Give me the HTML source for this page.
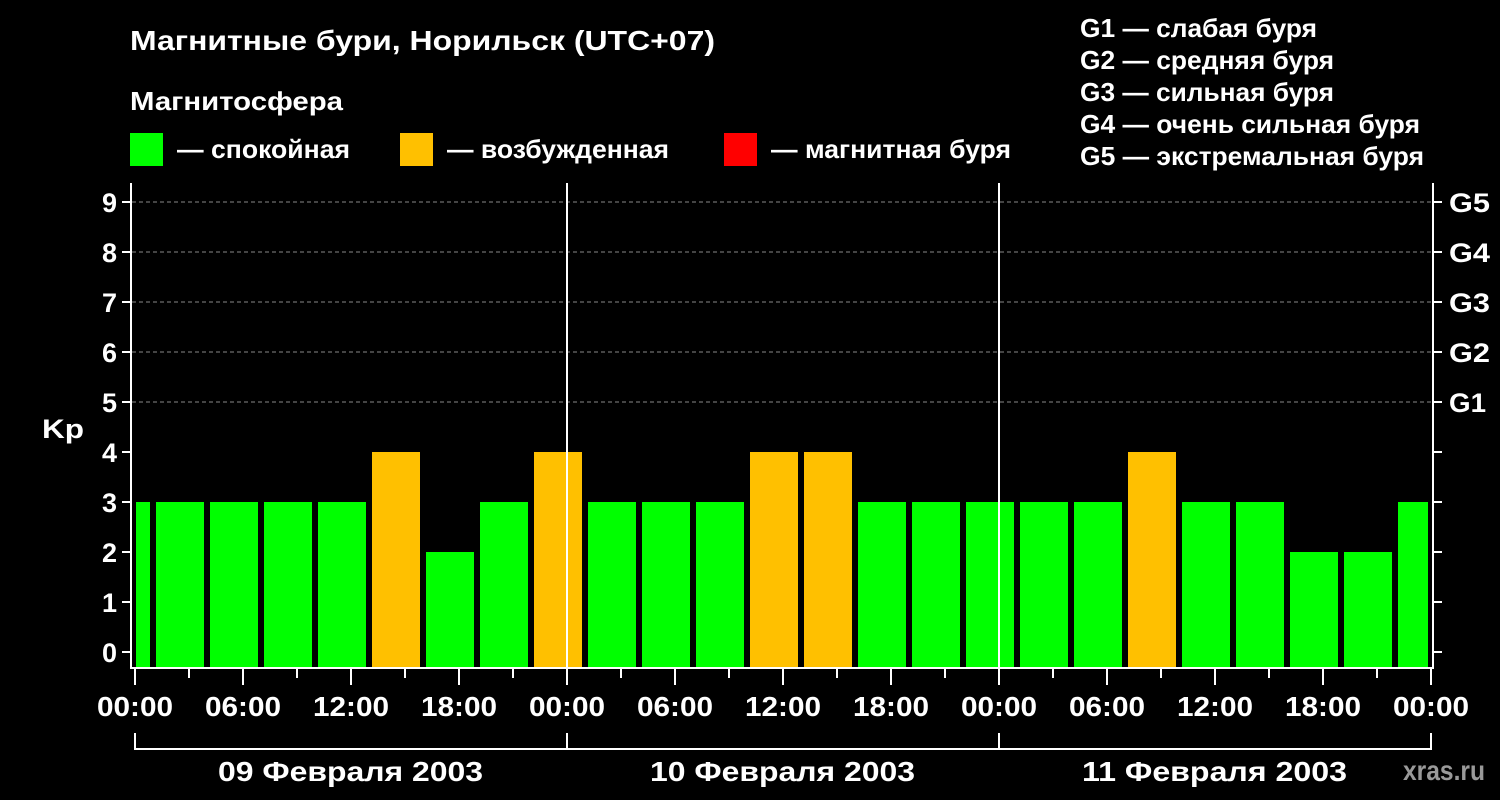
<!DOCTYPE html>
<html><head><meta charset="utf-8"><style>
html,body{margin:0;padding:0;background:#000;}
svg{display:block;font-family:"Liberation Sans",Arial,sans-serif;font-weight:bold;}
</style></head><body>
<svg width="1500" height="800" xmlns="http://www.w3.org/2000/svg">
<rect width="1500" height="800" fill="#000"/>
<g fill="#fff" font-size="26" lengthAdjust="spacingAndGlyphs">
<text x="130" y="50" font-size="28" textLength="585" lengthAdjust="spacingAndGlyphs">Магнитные бури, Норильск (UTC+07)</text>
<text x="130" y="110" textLength="213" lengthAdjust="spacingAndGlyphs">Магнитосфера</text>
<text x="177" y="158" textLength="173" lengthAdjust="spacingAndGlyphs">— спокойная</text>
<text x="447" y="158" textLength="222" lengthAdjust="spacingAndGlyphs">— возбужденная</text>
<text x="771" y="158" textLength="240" lengthAdjust="spacingAndGlyphs">— магнитная буря</text>
<text x="1080" y="37" textLength="237" lengthAdjust="spacingAndGlyphs">G1 — слабая буря</text>
<text x="1080" y="69" textLength="254" lengthAdjust="spacingAndGlyphs">G2 — средняя буря</text>
<text x="1080" y="101" textLength="254" lengthAdjust="spacingAndGlyphs">G3 — сильная буря</text>
<text x="1080" y="133" textLength="340" lengthAdjust="spacingAndGlyphs">G4 — очень сильная буря</text>
<text x="1080" y="165" textLength="344" lengthAdjust="spacingAndGlyphs">G5 — экстремальная буря</text>
</g>
<rect x="130" y="133" width="33" height="33" fill="#00ff00"/>
<rect x="400" y="133" width="33" height="33" fill="#ffc000"/>
<rect x="724" y="133" width="33" height="33" fill="#ff0000"/>
<g stroke="#888" stroke-dasharray="4,3" stroke-width="1">
<line x1="132" x2="1433" y1="202" y2="202"/><line x1="132" x2="1433" y1="252" y2="252"/>
<line x1="132" x2="1433" y1="302" y2="302"/><line x1="132" x2="1433" y1="352" y2="352"/>
<line x1="132" x2="1433" y1="402" y2="402"/>
</g>
<g id="bars"></g>
<g stroke="#fff" stroke-width="2" fill="none">
<line x1="567" y1="183" x2="567" y2="668"/><line x1="999" y1="183" x2="999" y2="668"/>
<line x1="131" y1="183" x2="131" y2="669"/><line x1="1433" y1="183" x2="1433" y2="669"/>
<line x1="130" y1="668" x2="1434" y2="668"/>
<path d="M135 733V749H1431V733M567 733V749M999 733V749"/>
</g>
<g fill="#fff" font-size="27" text-anchor="end" id="yl"></g>
<text x="42" y="438" fill="#fff" font-size="27" textLength="42" lengthAdjust="spacingAndGlyphs">Kp</text>
<g fill="#fff" font-size="27">
<text x="1449" y="212" textLength="41" lengthAdjust="spacingAndGlyphs">G5</text><text x="1449" y="262" textLength="41" lengthAdjust="spacingAndGlyphs">G4</text><text x="1449" y="312" textLength="41" lengthAdjust="spacingAndGlyphs">G3</text>
<text x="1449" y="362" textLength="41" lengthAdjust="spacingAndGlyphs">G2</text><text x="1449" y="412" textLength="37" lengthAdjust="spacingAndGlyphs">G1</text>
</g>
<g fill="#fff" font-size="28" id="xl"></g>
<g fill="#fff" font-size="28">
<text x="218" y="781" textLength="265" lengthAdjust="spacingAndGlyphs">09 Февраля 2003</text>
<text x="650" y="781" textLength="265" lengthAdjust="spacingAndGlyphs">10 Февраля 2003</text>
<text x="1082" y="781" textLength="265" lengthAdjust="spacingAndGlyphs">11 Февраля 2003</text>
</g>
<text x="1403" y="780" fill="#999" font-size="28" textLength="82" lengthAdjust="spacingAndGlyphs">xras.ru</text>
<script>
var ns="http://www.w3.org/2000/svg";
function el(p,t,a,tx){var e=document.createElementNS(ns,t);for(var k in a)e.setAttribute(k,a[k]);if(tx)e.textContent=tx;(typeof p=='string'?document.getElementById(p):p).appendChild(e);return e;}
var svg=document.querySelector('svg');
var G="#00ff00",O="#ffc000";
var v=[3,3,3,3,4,2,3,4,3,3,3,4,4,3,3,3,3,3,4,3,3,2,2,3];
el('bars','rect',{x:136,y:502,width:14,height:165,fill:G});
for(var i=0;i<24;i++){var x=156+54*i,w=i==23?30:48,t=652-50*v[i];
el('bars','rect',{x:x,y:t,width:w,height:667-t,fill:v[i]>=4?O:G});}
for(var k=0;k<=9;k++){var y=652-50*k;
el('yl','text',{x:117,y:y+10},String(k));
el(svg,'line',{x1:122,x2:131,y1:y,y2:y,stroke:'#fff','stroke-width':2});
el(svg,'line',{x1:1433,x2:1442,y1:y,y2:y,stroke:'#fff','stroke-width':2});}
var lab=["00:00","06:00","12:00","18:00"];
for(var j=0;j<=24;j++){var x=135+54*j;var maj=j%2==0;
el(svg,'line',{x1:x,x2:x,y1:669,y2:maj?685:678,stroke:'#fff','stroke-width':2});
if(maj){el('xl','text',{x:x-38,y:716,textLength:76,lengthAdjust:'spacingAndGlyphs'},lab[(j/2)%4]);}}
</script>
</svg>
</body></html>
